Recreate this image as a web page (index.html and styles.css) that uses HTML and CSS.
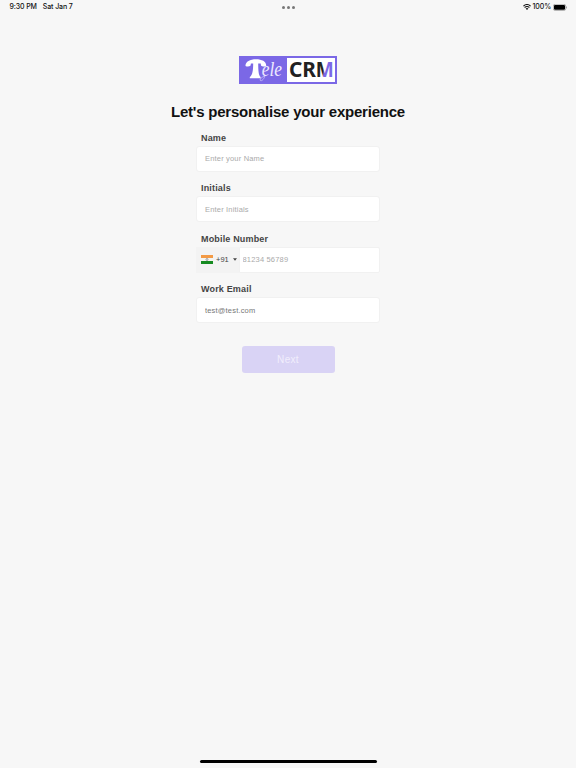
FILE: index.html
```html
<!DOCTYPE html>
<html lang="en">
<head>
<meta charset="utf-8">
<title>TeleCRM</title>
<link rel="stylesheet" href="styles.css">
</head>
<body>
<header class="status">
  <div class="status-left"><span class="time">9:30 PM</span><span class="date">Sat Jan 7</span></div>
  <div class="dots"><i></i><i></i><i></i></div>
  <div class="status-right">
    <svg class="wifi" width="8" height="6" viewBox="0 0 8 6"><path d="M.4 2.100Q4-1 7.600 2.100M1.600 3.500Q4 1.500 6.400 3.500" fill="none" stroke="#111" stroke-width="1.100"/><path d="M4 6 2.600 4.500Q4 3.500 5.400 4.500Z" fill="#111"/></svg>
    <span class="percent">100%</span>
    <svg class="battery" width="14" height="7" viewBox="0 0 14 7"><rect x=".3" y=".3" width="12.400" height="6.200" rx="1.800" fill="none" stroke="#888" stroke-width=".6"/><rect x="1" y="1" width="11" height="4.800" rx="1.100" fill="#000"/><path d="M13.100 2.300v2.200q.8-.3.8-1.100t-.8-1.100" fill="#888"/></svg>
  </div>
</header>
<main class="page">
  <svg class="logo" width="98" height="28" viewBox="0 0 98 28">
    <rect width="98" height="28" fill="#7b68e6"/>
    <rect x="48" y="2" width="48" height="24" fill="#fff"/>
    <path d="M6.500 10C6.300 5.500 11 3.200 17 3.200s10.500 2.300 10.200 6.800c-1.500.9-4.100.7-5.200-.4l-.3-2.200h-2.500c.1 7 .2 11.300 2.400 13.600v1.300H10.800V21c2.800-2.300 3.300-6.500 3.400-13.600h-2.300l-.3 2.200c-1.100 1.100-3.500 1.300-5.100.4Z" fill="#fff"/>
    <text class="logo-script" x="22.800" y="20.300" textLength="20.200" lengthAdjust="spacingAndGlyphs">ele</text>
    <path d="M26 20c-3.500 1-6 3.500-4.500 4.600 1.500.7 3.800-2 4.500-5" fill="none" stroke="#ddd6ff" stroke-width=".6"/>
    <defs><linearGradient id="ink" x1="0" x2="1" y1="0" y2=".25"><stop offset=".5" stop-color="#222"/><stop offset=".58" stop-color="#7b68e6"/></linearGradient></defs>
    <text class="logo-bold" x="50" y="21.300" textLength="27" lengthAdjust="spacingAndGlyphs" fill="#222">CR</text>
    <text class="logo-bold" x="76.800" y="21.300" textLength="18" lengthAdjust="spacingAndGlyphs" fill="url(#ink)">M</text>
  </svg>
  <h1>Let's personalise your experience</h1>
  <form class="form">
    <label class="field"><span class="label">Name</span><input type="text" placeholder="Enter your Name"></label>
    <label class="field"><span class="label">Initials</span><input type="text" placeholder="Enter Initials"></label>
    <div class="field"><span class="label">Mobile Number</span>
      <div class="phone">
        <div class="code">
          <svg width="12" height="9" viewBox="0 0 12 9"><rect width="12" height="9" fill="#f5f5f0"/><rect width="12" height="3" fill="#f39a45"/><rect y="6" width="12" height="3" fill="#168b21"/><circle cx="6" cy="4.500" r="1" fill="none" stroke="#667" stroke-width=".6"/></svg>
          <span>+91</span>
          <svg class="caret" width="4" height="3" viewBox="0 0 4 3"><path d="M0 .3h4L2 2.700Z" fill="#444"/></svg>
        </div>
        <input type="tel" placeholder="81234 56789">
      </div>
    </div>
    <label class="field"><span class="label">Work Email</span><input type="text" value="test@test.com"></label>
  </form>
  <button class="next" type="button" disabled>Next</button>
</main>
<div class="home"></div>
</body>
</html>
```
FILE: styles.css
```css
* { box-sizing: border-box; }
body { margin: 0; height: 768px; background: #f7f7f7; font-family: "Liberation Sans", Arial, sans-serif; display: flex; flex-direction: column; overflow: hidden; }
.status { height: 14px; display: grid; grid-template-columns: 1fr auto 1fr; align-items: center; padding: 0 9px 0 9.5px; font: 500 7px/14px Inter, sans-serif; letter-spacing: -.12px; color: #111; }
.status-left { display: flex; gap: 6px; }
.dots { display: flex; gap: 2px; }
.dots i { width: 3px; height: 3px; border-radius: 50%; background: #777; }
.status-right { display: flex; justify-content: flex-end; align-items: center; gap: 2px; }
.page { flex: 1; display: flex; flex-direction: column; align-items: center; padding-top: 42px; }
.logo { display: block; flex: none; }
.logo-script { font: italic 20px "Liberation Serif", serif; fill: #eeeaff; }
.logo-bold { font: bold 20.5px "Noto Sans", sans-serif; }
h1 { margin: 18px 0 0; font-size: 15px; line-height: 20px; font-weight: 700; letter-spacing: -.22px; color: #111; white-space: nowrap; }
.form { width: 184px; margin-top: 7.5px; display: grid; gap: 8.5px; }
.field { display: flex; flex-direction: column; height: 42px; }
.label { height: 16px; flex: none; padding-left: 5px; font-size: 9px; line-height: 17px; font-weight: 700; letter-spacing: .17px; color: #444; }
input { display: block; width: 100%; height: 26px; border: 1px solid #f1f1f1; border-radius: 3px; background: #fff; padding: 0 8px; font: 7.5px "Liberation Sans", Arial, sans-serif; letter-spacing: .18px; color: #777; outline: none; }
input::placeholder { color: #aaa; opacity: 1; }
.phone { display: flex; height: 26px; }
.code { width: 43px; flex: none; display: flex; align-items: center; background: #f3f3f3; padding-left: 5px; font-size: 7.5px; color: #444; }
.code span { margin: 0 4px 0 3px; }
.phone input { flex: 1; min-width: 0; padding: 0 2.5px; border-radius: 0 2px 2px 0; }
.next { width: 93px; height: 27px; margin-top: 22.5px; border: 0; border-radius: 3px; background: #d9d3f5; color: #f1eefc; font: 10px "Liberation Sans", Arial, sans-serif; letter-spacing: .3px; padding: 0; }
.home { align-self: center; width: 177px; height: 3px; margin-bottom: 5px; border-radius: 2px; background: #000; }
```
